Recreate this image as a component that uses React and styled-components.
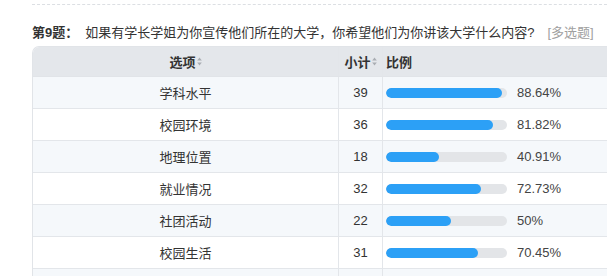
import React from "react";
import styled, { createGlobalStyle } from "styled-components";

const GlobalStyle = createGlobalStyle`
  html, body {
    margin: 0;
    padding: 0;
    background: #fff;
  }
  body {
    font-family: "Liberation Sans", "Noto Sans CJK SC", sans-serif;
    font-size: 13px;
    color: #333;
    overflow: hidden;
  }
`;

const rows = [
  { name: "学科水平", count: 39, pct: 88.64 },
  { name: "校园环境", count: 36, pct: 81.82 },
  { name: "地理位置", count: 18, pct: 40.91 },
  { name: "就业情况", count: 32, pct: 72.73 },
  { name: "社团活动", count: 22, pct: 50 },
  { name: "校园生活", count: 31, pct: 70.45 },
  { name: "", count: "", pct: null },
];

const SortIcon = () => (
  <SortSvg width="5" height="9" viewBox="0 0 5 9">
    <path d="M2.5 0.5 L4.8 3.6 L0.2 3.6 Z" />
    <path d="M2.5 8.5 L4.8 5.4 L0.2 5.4 Z" />
  </SortSvg>
);

export default function App() {
  return (
    <Page>
      <GlobalStyle />
      <Divider />
      <Title>
        <strong>第9题：</strong>
        <Question>如果有学长学姐为你宣传他们所在的大学，你希望他们为你讲该大学什么内容?</Question>
        <Tag>[多选题]</Tag>
      </Title>
      <Table>
        <HeaderRow>
          <Cell $center>
            选项
            <SortIcon />
          </Cell>
          <Cell $center>
            小计
            <SortIcon />
          </Cell>
          <Cell $last>比例</Cell>
        </HeaderRow>
        {rows.map((r, i) => (
          <Row key={i} $odd={i % 2 === 0}>
            <Cell $center>{r.name}</Cell>
            <Cell $center>{r.count}</Cell>
            <Cell $last>
              {r.pct !== null && (
                <>
                  <Track>
                    <Fill style={{ width: Math.min(121, Math.round(r.pct * 1.333 - 2)) }} />
                  </Track>
                  <Percent>{r.pct}%</Percent>
                </>
              )}
            </Cell>
          </Row>
        ))}
      </Table>
    </Page>
  );
}

const Page = styled.div`
  width: 607px;
  height: 276px;
  overflow: hidden;
  padding: 4px 0 0 32px;
  box-sizing: border-box;
`;

const Divider = styled.div`
  border-top: 1px dashed #dcdfe3;
  width: 100%;
`;

const Title = styled.div`
  display: flex;
  align-items: center;
  margin: 16px 0 5px;
  height: 20px;
  white-space: nowrap;
  color: #333;
  strong {
    font-weight: bold;
    color: #333;
  }
`;

const Question = styled.span`
  margin-left: 7px;
  color: #333;
`;

const Tag = styled.span`
  margin-left: 13px;
  color: #a0a0a0;
`;

const Table = styled.div`
  width: 640px;
  border: 1px solid #e1e4e8;
  border-right: none;
  border-bottom: none;
  border-top-left-radius: 7px;
  overflow: hidden;
`;

const Row = styled.div`
  display: grid;
  grid-template-columns: 306px 44px 1fr;
  height: 32px;
  box-sizing: border-box;
  border-bottom: 1px solid #e3e6ea;
  background: ${(p) => (p.$odd ? "#f5f8fb" : "#ffffff")};
`;

const HeaderRow = styled(Row)`
  height: 30px;
  background: #e4e7eb;
  font-weight: bold;
  border-bottom: 1px solid #e1e4e8;
`;

const Cell = styled.div`
  display: flex;
  align-items: center;
  justify-content: ${(p) => (p.$center ? "center" : "flex-start")};
  padding-left: ${(p) => (p.$last ? "3px" : "0")};
  border-right: ${(p) => (p.$last ? "none" : "1px solid #e3e6ea")};
  white-space: nowrap;
`;

const SortSvg = styled.svg`
  margin-left: 1px;
  fill: #a9adb2;
`;

const Track = styled.div`
  width: 121px;
  height: 10px;
  border-radius: 5px;
  background: #e3e5e8;
  overflow: hidden;
  margin-top: 1px;
`;

const Fill = styled.div`
  height: 100%;
  border-radius: 5px;
  background: #2ca0f6;
`;

const Percent = styled.span`
  margin-left: 10px;
  color: #444;
`;
